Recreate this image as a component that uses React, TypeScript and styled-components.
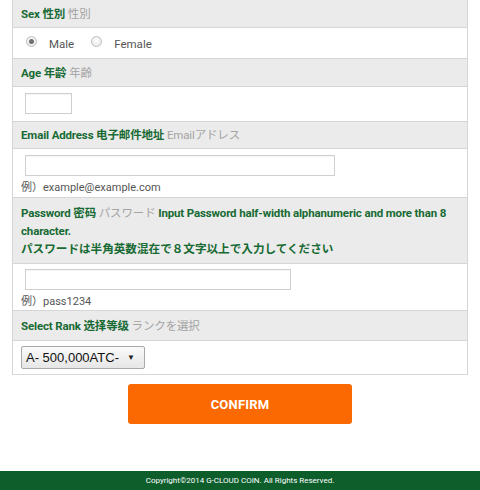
import React from "react";
import styled, { createGlobalStyle } from "styled-components";

const Global = createGlobalStyle`
  html, body { margin: 0; padding: 0; background: #fff; }
  body { font-family: Roboto, "Noto Sans CJK JP", sans-serif; color: #444; }
  * { box-sizing: border-box; }
`;

const Page = styled.div`
  width: 480px;
  height: 490px;
  display: flex;
  flex-direction: column;
  overflow: hidden;
`;

const Form = styled.div`
  margin: 0 12px;
  border-left: 1px solid #d6d6d6;
  border-right: 1px solid #d6d6d6;
  display: flex;
  flex-direction: column;
`;

const Head = styled.div<{ $h?: number }>`
  background: #ebebeb;
  border-bottom: 1px solid #d6d6d6;
  min-height: ${(p) => p.$h ?? 28}px;
  padding: 0 8px;
  display: flex;
  align-items: center;
  font-size: 11.5px;
  letter-spacing: -0.15px;
  font-weight: 700;
  color: #176a33;
  line-height: 18px;
  white-space: pre;
`;

const TallHead = styled(Head)`
  display: block;
  white-space: normal;
  padding: 6px 8px 5px;
`;

const Sub = styled.span`
  color: #a3a3a3;
  font-weight: 400;
`;

const Jp = styled.div`
  font-size: 11.6px;
  letter-spacing: 0;
`;

const Cell = styled.div<{ $h: number; $pt?: number; $pl?: number }>`
  height: ${(p) => p.$h}px;
  border-bottom: 1px solid #d6d6d6;
  padding: ${(p) => p.$pt ?? 6}px 0 0 ${(p) => p.$pl ?? 12}px;
  display: flex;
  flex-direction: column;
  align-items: flex-start;
`;

const RadioRow = styled.div`
  display: flex;
  align-items: center;
  height: 29px;
  padding-left: 13px;
  font-size: 11.5px;
  color: #555;
`;

const Radio = styled.span<{ $on?: boolean }>`
  width: 11px;
  height: 11px;
  border-radius: 50%;
  border: 1px solid #bdbdbd;
  background: radial-gradient(circle at 50% 40%, #fff 0%, #e3e3e3 100%);
  display: inline-flex;
  align-items: center;
  justify-content: center;
  margin-right: 12px;
  margin-top: -2px;
  &::after {
    content: "";
    width: 5px;
    height: 5px;
    border-radius: 50%;
    background: ${(p) => (p.$on ? "#6f6f6f" : "transparent")};
  }
`;

const Label = styled.span`
  margin-right: 17px;
  padding-top: 3px;
`;

const Input = styled.div<{ $w: number }>`
  width: ${(p) => p.$w}px;
  height: 21px;
  border: 1px solid #cfcfcf;
  box-shadow: inset 0 1px 1px rgba(0, 0, 0, 0.04);
  background: #fff;
`;

const Hint = styled.div`
  font-size: 11px;
  color: #555;
  margin: 2px 0 0 -4px;
`;

const Select = styled.div`
  width: 124px;
  height: 23px;
  border: 1px solid #a9a9a9;
  border-radius: 2px;
  background: linear-gradient(#fafafa, #e6e6e6);
  display: flex;
  align-items: center;
  justify-content: space-between;
  padding: 0 9px 0 4px;
  font-size: 13px;
  color: #111;
  font-family: "Liberation Sans", Arial, sans-serif;
`;

const Arrow = styled.span`
  font-size: 8px;
  color: #222;
`;

const ButtonWrap = styled.div`
  display: flex;
  justify-content: center;
  padding-top: 9px;
  flex: 1;
`;

const Button = styled.button`
  width: 224px;
  height: 40px;
  border: none;
  border-radius: 3px;
  background: #fb6a02;
  color: #fff;
  font-family: Roboto, sans-serif;
  font-weight: 700;
  font-size: 13px;
  letter-spacing: 0.2px;
`;

const Footer = styled.div`
  height: 19px;
  background: #0d5e2b;
  color: #fff;
  font-size: 8px;
  display: flex;
  align-items: center;
  justify-content: center;
`;

export default function App() {
  return (
    <Page>
      <Global />
      <Form>
        <Head $h={28}>
          {"Sex 性別 "}
          <Sub>性別</Sub>
        </Head>
        <Cell $h={31} $pt={0} $pl={0}>
          <RadioRow>
            <Radio $on />
            <Label>Male</Label>
            <Radio />
            <Label>Female</Label>
          </RadioRow>
        </Cell>
        <Head $h={28}>
          {"Age 年龄 "}
          <Sub>年齢</Sub>
        </Head>
        <Cell $h={35} $pt={6} $pl={12}>
          <Input $w={47} />
        </Cell>
        <Head $h={27}>
          {"Email Address 电子邮件地址 "}
          <Sub>Emailアドレス</Sub>
        </Head>
        <Cell $h={49} $pt={6}>
          <Input $w={310} />
          <Hint>例）example@example.com</Hint>
        </Cell>
        <TallHead $h={65}>
          Password 密码 <Sub>パスワード</Sub> Input Password half-width alphanumeric and more than 8 character.
          <Jp>パスワードは半角英数混在で８文字以上で入力してください</Jp>
        </TallHead>
        <Cell $h={47} $pt={5}>
          <Input $w={266} />
          <Hint>例）pass1234</Hint>
        </Cell>
        <Head $h={30}>
          {"Select Rank 选择等级 "}
          <Sub>ランクを選択</Sub>
        </Head>
        <Cell $h={34} $pt={5} $pl={8}>
          <Select>
            <span>A- 500,000ATC-</span>
            <Arrow>▼</Arrow>
          </Select>
        </Cell>
      </Form>
      <ButtonWrap>
        <Button>CONFIRM</Button>
      </ButtonWrap>
      <Footer>Copyright©2014 G-CLOUD COIN. All Rights Reserved.</Footer>
    </Page>
  );
}
